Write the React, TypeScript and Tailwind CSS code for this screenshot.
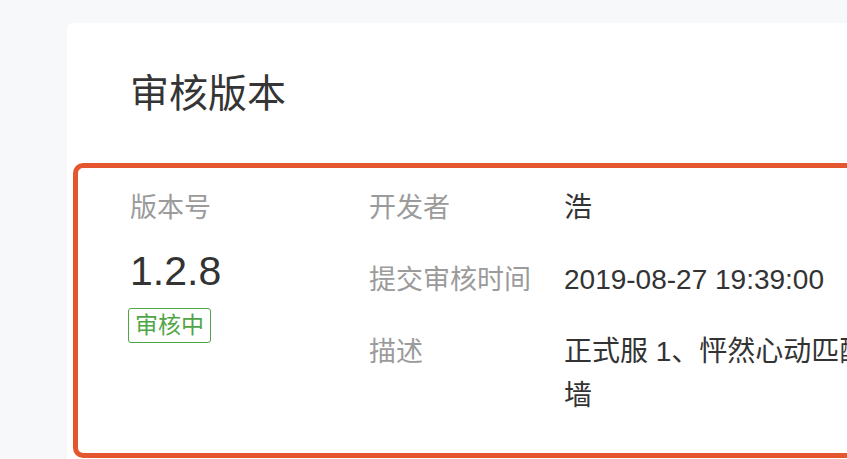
import React from 'react';

const rows = [
  { label: '开发者', value: '浩' },
  { label: '提交审核时间', value: '2019-08-27 19:39:00' },
  { label: '描述', value: '正式服 1、怦然心动匹配墙' },
];

const App = () => {
  return (
    <div
      className="h-[459px] w-[847px] overflow-hidden bg-[#f7f8fa] pl-[67px] pt-[23px]"
      style={{ fontFamily: '"Liberation Sans", "Noto Sans CJK SC", sans-serif' }}
    >
      {/* Card */}
      <div className="w-[1000px] rounded-md bg-white pb-10">
        <h1 className="pl-[63px] pt-[42px] text-[39px] leading-[57px] font-normal text-[#353535]">审核版本</h1>

        {/* Highlighted version block */}
        <div className="ml-[6px] mt-[41px] flex rounded-[10px] border-[5px] border-[#e4572e] pl-[52px] pt-[18px] pb-[35px]">
          {/* Version */}
          <div className="w-[239px] shrink-0">
            <div className="text-[27px] leading-[44px] text-[#9b9b9b]">版本号</div>
            <div className="mt-[17px] text-[41px] leading-[48px] text-[#333]">1.2.8</div>
            <div className="-ml-[2px] mt-[13px] inline-block rounded-[3px] border-[1.5px] border-[#4fa646] px-[6px] text-[23px] leading-[33px] text-[#4fa646]">
              审核中
            </div>
          </div>

          {/* Details */}
          <div className="grid grid-cols-[195px_310px] gap-y-[28px]">
            {rows.map((row) => (
              <React.Fragment key={row.label}>
                <div className="text-[27px] leading-[44px] text-[#9b9b9b] whitespace-nowrap">{row.label}</div>
                <div className="text-[28px] leading-[44px] text-[#333]">{row.value}</div>
              </React.Fragment>
            ))}
          </div>
        </div>
      </div>
    </div>
  );
};

export default App;
